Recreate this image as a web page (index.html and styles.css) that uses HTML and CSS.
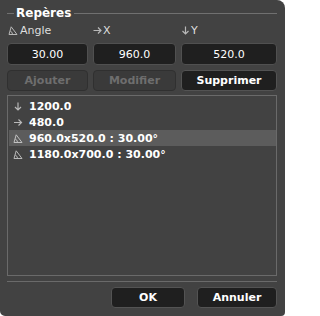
FILE: index.html
```html
<!DOCTYPE html>
<html lang="fr">
<head>
<meta charset="utf-8">
<title>Repères</title>
<link rel="stylesheet" href="styles.css">
</head>
<body>
<div class="window">
  <div class="group-title">
    <span class="line short"></span>
    <span class="title">Repères</span>
    <span class="line long"></span>
  </div>

  <div class="grid">
    <div class="label">
      <svg class="ico" width="10" height="9" viewBox="0 0 10 9"><path d="M1 8.5 L3.2 0.8 L9 8.5 Z M2.2 5 Q4.2 5.6 4.6 8.5" fill="none" stroke="#b8b8b8" stroke-width="1"/></svg>
      <span>Angle</span>
    </div>
    <div class="label">
      <svg class="ico" width="9" height="9" viewBox="0 0 9 9"><path d="M0.5 4.5 H8 M5 1.5 L8 4.5 L5 7.5" fill="none" stroke="#b8b8b8" stroke-width="1.2"/></svg>
      <span>X</span>
    </div>
    <div class="label">
      <svg class="ico" width="9" height="9" viewBox="0 0 9 9"><path d="M4.5 0.5 V8 M1.5 5 L4.5 8 L7.5 5" fill="none" stroke="#b8b8b8" stroke-width="1.2"/></svg>
      <span>Y</span>
    </div>

    <div class="field">30.00</div>
    <div class="field">960.0</div>
    <div class="field">520.0</div>

    <button class="btn disabled">Ajouter</button>
    <button class="btn disabled">Modifier</button>
    <button class="btn">Supprimer</button>
  </div>

  <div class="list">
    <div class="row">
      <svg class="ico" width="9" height="9" viewBox="0 0 9 9"><path d="M4.5 0.5 V8 M1.5 5 L4.5 8 L7.5 5" fill="none" stroke="#b8b8b8" stroke-width="1.2"/></svg>
      <span>1200.0</span>
    </div>
    <div class="row">
      <svg class="ico" width="9" height="9" viewBox="0 0 9 9"><path d="M0.5 4.5 H8 M5 1.5 L8 4.5 L5 7.5" fill="none" stroke="#b8b8b8" stroke-width="1.2"/></svg>
      <span>480.0</span>
    </div>
    <div class="row selected">
      <svg class="ico" width="10" height="9" viewBox="0 0 10 9"><path d="M1 8.5 L3.2 0.8 L9 8.5 Z M2.2 5 Q4.2 5.6 4.6 8.5" fill="none" stroke="#c0c0c0" stroke-width="1"/></svg>
      <span>960.0x520.0 : 30.00°</span>
    </div>
    <div class="row">
      <svg class="ico" width="10" height="9" viewBox="0 0 10 9"><path d="M1 8.5 L3.2 0.8 L9 8.5 Z M2.2 5 Q4.2 5.6 4.6 8.5" fill="none" stroke="#b8b8b8" stroke-width="1"/></svg>
      <span>1180.0x700.0 : 30.00°</span>
    </div>
  </div>

  <div class="separator"></div>

  <div class="footer">
    <button class="btn ok">OK</button>
    <button class="btn cancel">Annuler</button>
  </div>
</div>
</body>
</html>
```

FILE: styles.css
```css
html, body {
  margin: 0;
  padding: 0;
  background: #ffffff;
}

.window {
  width: 285px;
  height: 316px;
  box-sizing: border-box;
  padding: 5px 8px 0 7px;
  background: #424242;
  border-radius: 0 8px 4px 5px;
  display: flex;
  flex-direction: column;
  font-family: "DejaVu Sans", Verdana, sans-serif;
  font-size: 11px;
  color: #ffffff;
  overflow: hidden;
}

.group-title {
  height: 16px;
  display: flex;
  align-items: center;
}

.group-title .line {
  height: 1px;
  background: #707070;
}

.group-title .short {
  width: 7px;
}

.group-title .long {
  flex: 1;
}

.group-title .title {
  font-weight: bold;
  font-size: 12px;
  padding: 0 3px 0 2px;
  color: #ffffff;
}

.grid {
  margin-top: 2px;
  display: grid;
  grid-template-columns: 81px 83px 96px;
  grid-template-rows: 15px 22px 21px;
  column-gap: 5px;
  row-gap: 5px;
}

.label {
  display: flex;
  align-items: center;
  color: #dedede;
  font-size: 11px;
}

.label .ico {
  margin-right: 1px;
}

.label:first-child .ico {
  margin-left: 1px;
  margin-right: 2px;
}

.field {
  box-sizing: border-box;
  background: #1f1f1f;
  border: 1px solid #505050;
  border-radius: 4px;
  display: flex;
  align-items: center;
  justify-content: center;
  color: #ffffff;
}

.btn {
  box-sizing: border-box;
  margin: 0;
  padding: 0;
  background: #1f1f1f;
  border: 1px solid #535353;
  border-radius: 4px;
  color: #ffffff;
  font-family: "DejaVu Sans", Verdana, sans-serif;
  font-size: 11px;
  font-weight: bold;
  height: 21px;
}

.btn.disabled {
  background: #3a3a3a;
  border-color: #303030;
  color: #6e6e6e;
}

.list {
  margin-top: 4px;
  height: 181px;
  box-sizing: border-box;
  border: 1px solid #6a6a6a;
  padding: 2px 0 0 1px;
}

.row {
  height: 16px;
  display: flex;
  align-items: center;
  padding-left: 4px;
  font-weight: bold;
  color: #ffffff;
}

.row .ico {
  width: 10px;
  margin-right: 6px;
}

.row.selected {
  background: #5c5c5c;
}

.separator {
  margin-top: 5px;
  height: 1px;
  background: #6a6a6a;
}

.footer {
  margin-top: 5px;
  display: flex;
  justify-content: flex-end;
  gap: 12px;
}

.footer .ok {
  width: 74px;
}

.footer .cancel {
  width: 80px;
}
```
